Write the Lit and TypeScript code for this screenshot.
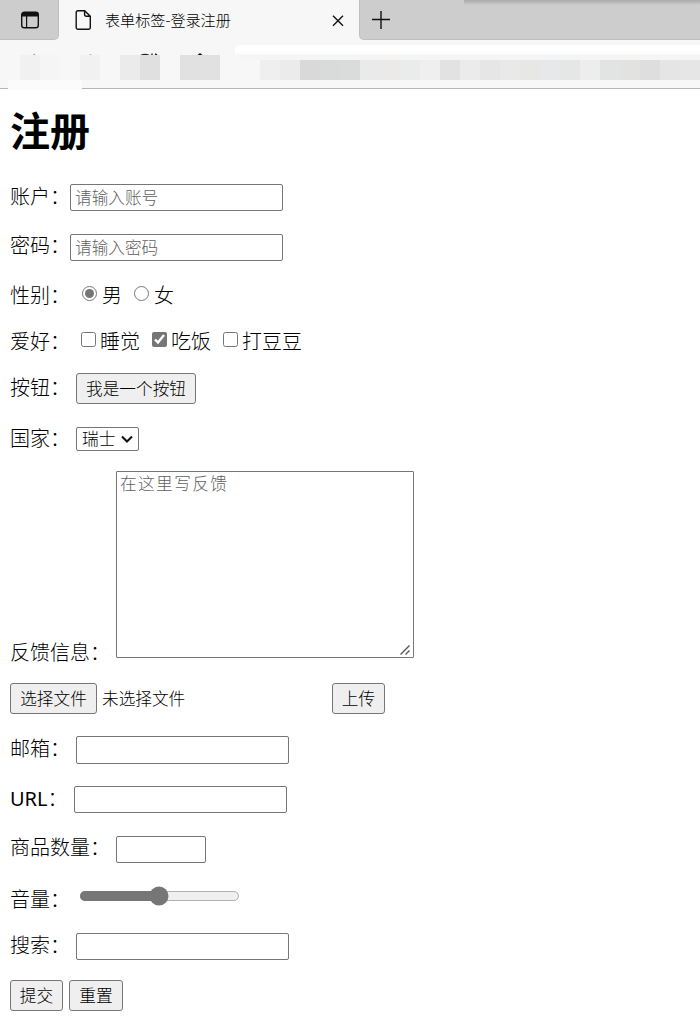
import { html, css, LitElement } from 'lit';
import { customElement } from 'lit/decorators.js';

const SWATCHES = [
  '#f7f7f7', '#f1f1f1', '#f5f5f5', '#f7f7f7', '#f1f1f1', '#f7f7f7', '#ebebeb', '#e0e0e0',
  '#f7f7f7', '#e1e1e1', '#e1e1e1', '#f7f7f7', '#f7f7f7', '#efefef', '#ebebeb', '#dad9da',
  '#d9dbda', '#dadcdb', '#e9eae9', '#ebeae9', '#eaecec', '#efefef', '#e2e2e2', '#ebebeb',
  '#e6e6e6', '#e9e9e9', '#e7e7e6', '#e6e8ea', '#e4e7e5', '#ededed', '#e2e4e3', '#e2e2e0',
  '#dedede', '#e5e5e5', '#e6e6e6',
];

@customElement('browser-bar')
class BrowserBar extends LitElement {
  static styles = css`
    :host {
      display: block;
      height: 89px;
      box-sizing: border-box;
      background: #f7f7f7;
      border-bottom: 1px solid #b6b6b6;
      font-family: "Noto Sans CJK SC", sans-serif;
    }

    /* tab strip */
    .tabs {
      display: flex;
      height: 40px;
      background: #f7f7f7;
    }

    .side {
      display: flex;
      align-items: center;
      justify-content: center;
      width: 59px;
      box-sizing: border-box;
      padding-left: 2px;
      background: #cdcdcd;
      border-right: 1px solid #bfbfbf;
      border-bottom: 1px solid #bfbfbf;
      border-bottom-right-radius: 5px;
    }

    .tab {
      display: flex;
      align-items: center;
      width: 300px;
      box-sizing: border-box;
      padding: 0 14px 0 16px;
    }

    .title {
      flex: 1;
      margin: -2px 0 0 13px;
      font-size: 15.1px;
      line-height: 20px;
      color: #000;
    }

    .rest {
      flex: 1;
      display: flex;
      align-items: center;
      padding-left: 12px;
      background: linear-gradient(#aaa, #cdcdcd) 104px 0 / 100% 5px no-repeat #cdcdcd;
      border-left: 1px solid #bfbfbf;
      border-bottom: 1px solid #bfbfbf;
      border-bottom-left-radius: 5px;
    }

    /* toolbar with the blurred out address */
    .toolbar {
      display: flex;
      height: 15px;
      padding-top: 5px;
      box-sizing: border-box;
    }

    .nav {
      width: 235px;
    }

    .address {
      flex: 1;
      background: linear-gradient(#fff 60%, #f9f9f9);
      border-top-left-radius: 5px;
    }

    .mosaic {
      display: flex;
      height: 25px;
    }

    .swatch {
      width: 20px;
      height: 25px;
      box-sizing: border-box;
    }

    .swatch.short {
      border-top: 5px solid #f5f5f5;
    }

    svg {
      display: block;
    }

    .patch {
      width: 74px;
      height: 10px;
      margin-left: 8px;
      background: #fbfbfb;
    }
  `;

  render() {
    return html`
      <div class="tabs">
        <div class="side">
          <svg width="20" height="20" viewBox="0 0 20 20">
            <rect x="1.7" y="2.2" width="16.6" height="15.6" rx="2.6" fill="none" stroke="#111" stroke-width="1.4" />
            <path d="M1.7 6.5V4.5A2.3 2.3 0 0 1 4 2.2h12a2.3 2.3 0 0 1 2.3 2.3v2z" fill="#111" />
            <path d="M6.6 6v11.5" stroke="#111" stroke-width="1.2" />
          </svg>
        </div>
        <div class="tab">
          <svg width="17" height="22" viewBox="0 0 17 22">
            <path
              d="M3 1.7h6.7l5.6 5.6v11.2a1.8 1.8 0 0 1-1.8 1.8H3a1.8 1.8 0 0 1-1.8-1.8v-15A1.8 1.8 0 0 1 3 1.7zM9.6 1.7v4a1.6 1.6 0 0 0 1.6 1.6h4.1"
              fill="none" stroke="#111" stroke-width="1.4" stroke-linejoin="round" />
          </svg>
          <span class="title">表单标签-登录注册</span>
          <svg width="14" height="14" viewBox="0 0 14 14">
            <path d="M2 2.7l10 10M12 2.7l-10 10" stroke="#111" stroke-width="1.4" />
          </svg>
        </div>
        <div class="rest">
          <svg width="18" height="18" viewBox="0 0 18 18">
            <path d="M9 0v18M0 8.5h18" stroke="#111" stroke-width="1.4" />
          </svg>
        </div>
      </div>
      <div class="toolbar">
        <svg class="nav" height="10" viewBox="0 0 235 10">
          <path d="M31 12l4-3" stroke="#aaa" stroke-width="1.2" />
          <path d="M89 9.5h3" stroke="#ccc" />
          <path d="M141 10.5q4-2 8 0M152 8.5v2M155 9l2 1" fill="none" stroke="#222" stroke-width="1.4" />
          <path d="M197.5 10l2.5-2 2.5 2z" fill="#111" />
        </svg>
        <div class="address"></div>
      </div>
      <div class="mosaic">
        ${SWATCHES.map(
          (color, i) => html`<div class="swatch ${i > 11 ? 'short' : ''}" style="background-color: ${color}"></div>`
        )}
      </div>
      <div class="patch"></div>
    `;
  }
}

@customElement('app-root')
class AppRoot extends LitElement {
  static styles = css`
    :host {
      display: block;
      height: 1025px;
      overflow: hidden;
      background: #fff;
      color: #000;
      font-family: "Noto Sans CJK SC", sans-serif;
      font-size: 20px;
      font-weight: 300;
    }

    .heading {
      height: 83px;
      margin: 0;
      padding-left: 10px;
      font-size: 40px;
      font-weight: 700;
      line-height: 81px;
    }

    .form {
      display: grid;
      grid-template-rows: 51px 49px 43px 49px 49px 52px 199px 69px 34px 65px 35px 58px 43px 55px;
      margin: 0;
      padding-left: 10px;
    }

    .row {
      display: flex;
      align-items: center;
    }

    .label {
      width: 66px;
      line-height: 28px;
      white-space: nowrap;
    }

    .up {
      padding-bottom: 3px;
    }

    .higher {
      padding-bottom: 5px;
    }

    .down {
      padding-top: 3px;
    }

    .lower {
      padding-top: 5px;
    }

    .tight {
      width: 60px;
    }

    .url {
      width: 64px;
    }

    .latin {
      font-family: "Noto Sans", sans-serif;
      font-weight: 400;
    }

    .wide {
      width: 106px;
    }

    .feedback {
      align-self: flex-end;
      margin-bottom: -2px;
    }

    input,
    textarea,
    select,
    button {
      box-sizing: border-box;
      margin: 0;
      font-family: inherit;
      font-weight: inherit;
      font-size: 16.67px;
      color: #000;
    }

    .field {
      width: 213px;
      height: 27px;
      padding: 0 4px 2px;
      border: 1px solid #767676;
      border-radius: 2px;
      background: #fff;
      line-height: 23px;
    }

    .email {
      height: 28px;
    }

    .number {
      width: 90px;
    }

    ::placeholder {
      color: #606060;
    }

    .check {
      width: 15px;
      height: 15px;
      accent-color: #767676;
    }

    .option {
      margin: 3px 0 0 5px;
      line-height: 28px;
    }

    .box + .option {
      margin-left: 4px;
    }

    .first {
      margin-left: 5px;
    }

    .radio {
      margin-left: 6px;
    }

    .next {
      margin-left: 12px;
    }

    .button {
      height: 31px;
      padding: 0;
      border: 1px solid #767676;
      border-radius: 3px;
      background: #efefef;
      line-height: 27px;
      text-align: center;
    }

    .long {
      width: 120px;
    }

    .short {
      width: 53px;
    }

    .file {
      width: 87px;
    }

    .select {
      display: flex;
      align-items: center;
      width: 63px;
      height: 24px;
      box-sizing: border-box;
      border: 1px solid #767676;
      border-radius: 2px;
    }

    .country {
      appearance: none;
      width: 44px;
      height: 26px;
      margin-top: -2px;
      padding: 0 0 0 5px;
      border: none;
      background: none;
    }

    .message {
      position: relative;
      height: 187px;
    }

    .textarea {
      display: block;
      width: 298px;
      height: 187px;
      padding: 1px 3px;
      border: 1px solid #767676;
      border-radius: 1px;
      line-height: 20px;
      letter-spacing: 1.4px;
      resize: none;
    }

    /* resize handle in the corner */
    .grip {
      position: absolute;
      right: 4px;
      bottom: 3px;
    }

    .file_name {
      width: 230px;
      margin: -1px 0 0 5px;
      font-size: 16.67px;
    }

    .range {
      zoom: 1.25;
      width: 129px;
      height: 16px;
      margin-left: 2px;
      accent-color: #767676;
    }

    .reset {
      width: 54px;
      margin-left: 6px;
    }
  `;

  render() {
    return html`
      <browser-bar></browser-bar>
      <h1 class="heading">注册</h1>
      <form class="form">
        <div class="row">
          <label class="label tight up">账户：</label>
          <input class="field" type="text" placeholder="请输入账号" />
        </div>
        <div class="row">
          <label class="label tight higher">密码：</label>
          <input class="field" type="password" placeholder="请输入密码" />
        </div>
        <div class="row">
          <span class="label down">性别：</span>
          <input class="check radio" type="radio" name="sex" checked />
          <span class="option">男</span>
          <input class="check next" type="radio" name="sex" />
          <span class="option">女</span>
        </div>
        <div class="row">
          <span class="label down">爱好：</span>
          <input class="check box first" type="checkbox" />
          <span class="option">睡觉</span>
          <input class="check box next" type="checkbox" checked />
          <span class="option">吃饭</span>
          <input class="check box next" type="checkbox" />
          <span class="option">打豆豆</span>
        </div>
        <div class="row">
          <span class="label up">按钮：</span>
          <button class="button long" type="button">我是一个按钮</button>
        </div>
        <div class="row">
          <span class="label up">国家：</span>
          <div class="select">
            <select class="country">
              <option>瑞士</option>
            </select>
            <svg width="12" height="8" viewBox="0 0 12 8">
              <path d="M1 1.5l5 5 5-5" fill="none" stroke="#111" stroke-width="2.1" />
            </svg>
          </div>
        </div>
        <div class="row">
          <span class="label wide feedback">反馈信息：</span>
          <div class="message">
            <textarea class="textarea" placeholder="在这里写反馈"></textarea>
            <svg class="grip" width="10" height="10" viewBox="0 0 10 10">
              <path d="M.5 9.5l9-9M5.5 9.5l4-4" stroke="#555" stroke-width="1.4" />
            </svg>
          </div>
        </div>
        <div class="row">
          <button class="button file" type="button">选择文件</button>
          <span class="file_name">未选择文件</span>
          <button class="button short" type="button">上传</button>
        </div>
        <div class="row">
          <label class="label higher">邮箱：</label>
          <input class="field email" type="email" />
        </div>
        <div class="row">
          <label class="label url up"><span class="latin">URL</span>：</label>
          <input class="field" type="url" />
        </div>
        <div class="row">
          <label class="label wide higher">商品数量：</label>
          <input class="field number" type="number" />
        </div>
        <div class="row">
          <label class="label lower">音量：</label>
          <input class="range" type="range" />
        </div>
        <div class="row">
          <label class="label up">搜索：</label>
          <input class="field" type="search" />
        </div>
        <div class="row">
          <button class="button short" type="button">提交</button>
          <button class="button reset" type="button">重置</button>
        </div>
      </form>
    `;
  }
}
